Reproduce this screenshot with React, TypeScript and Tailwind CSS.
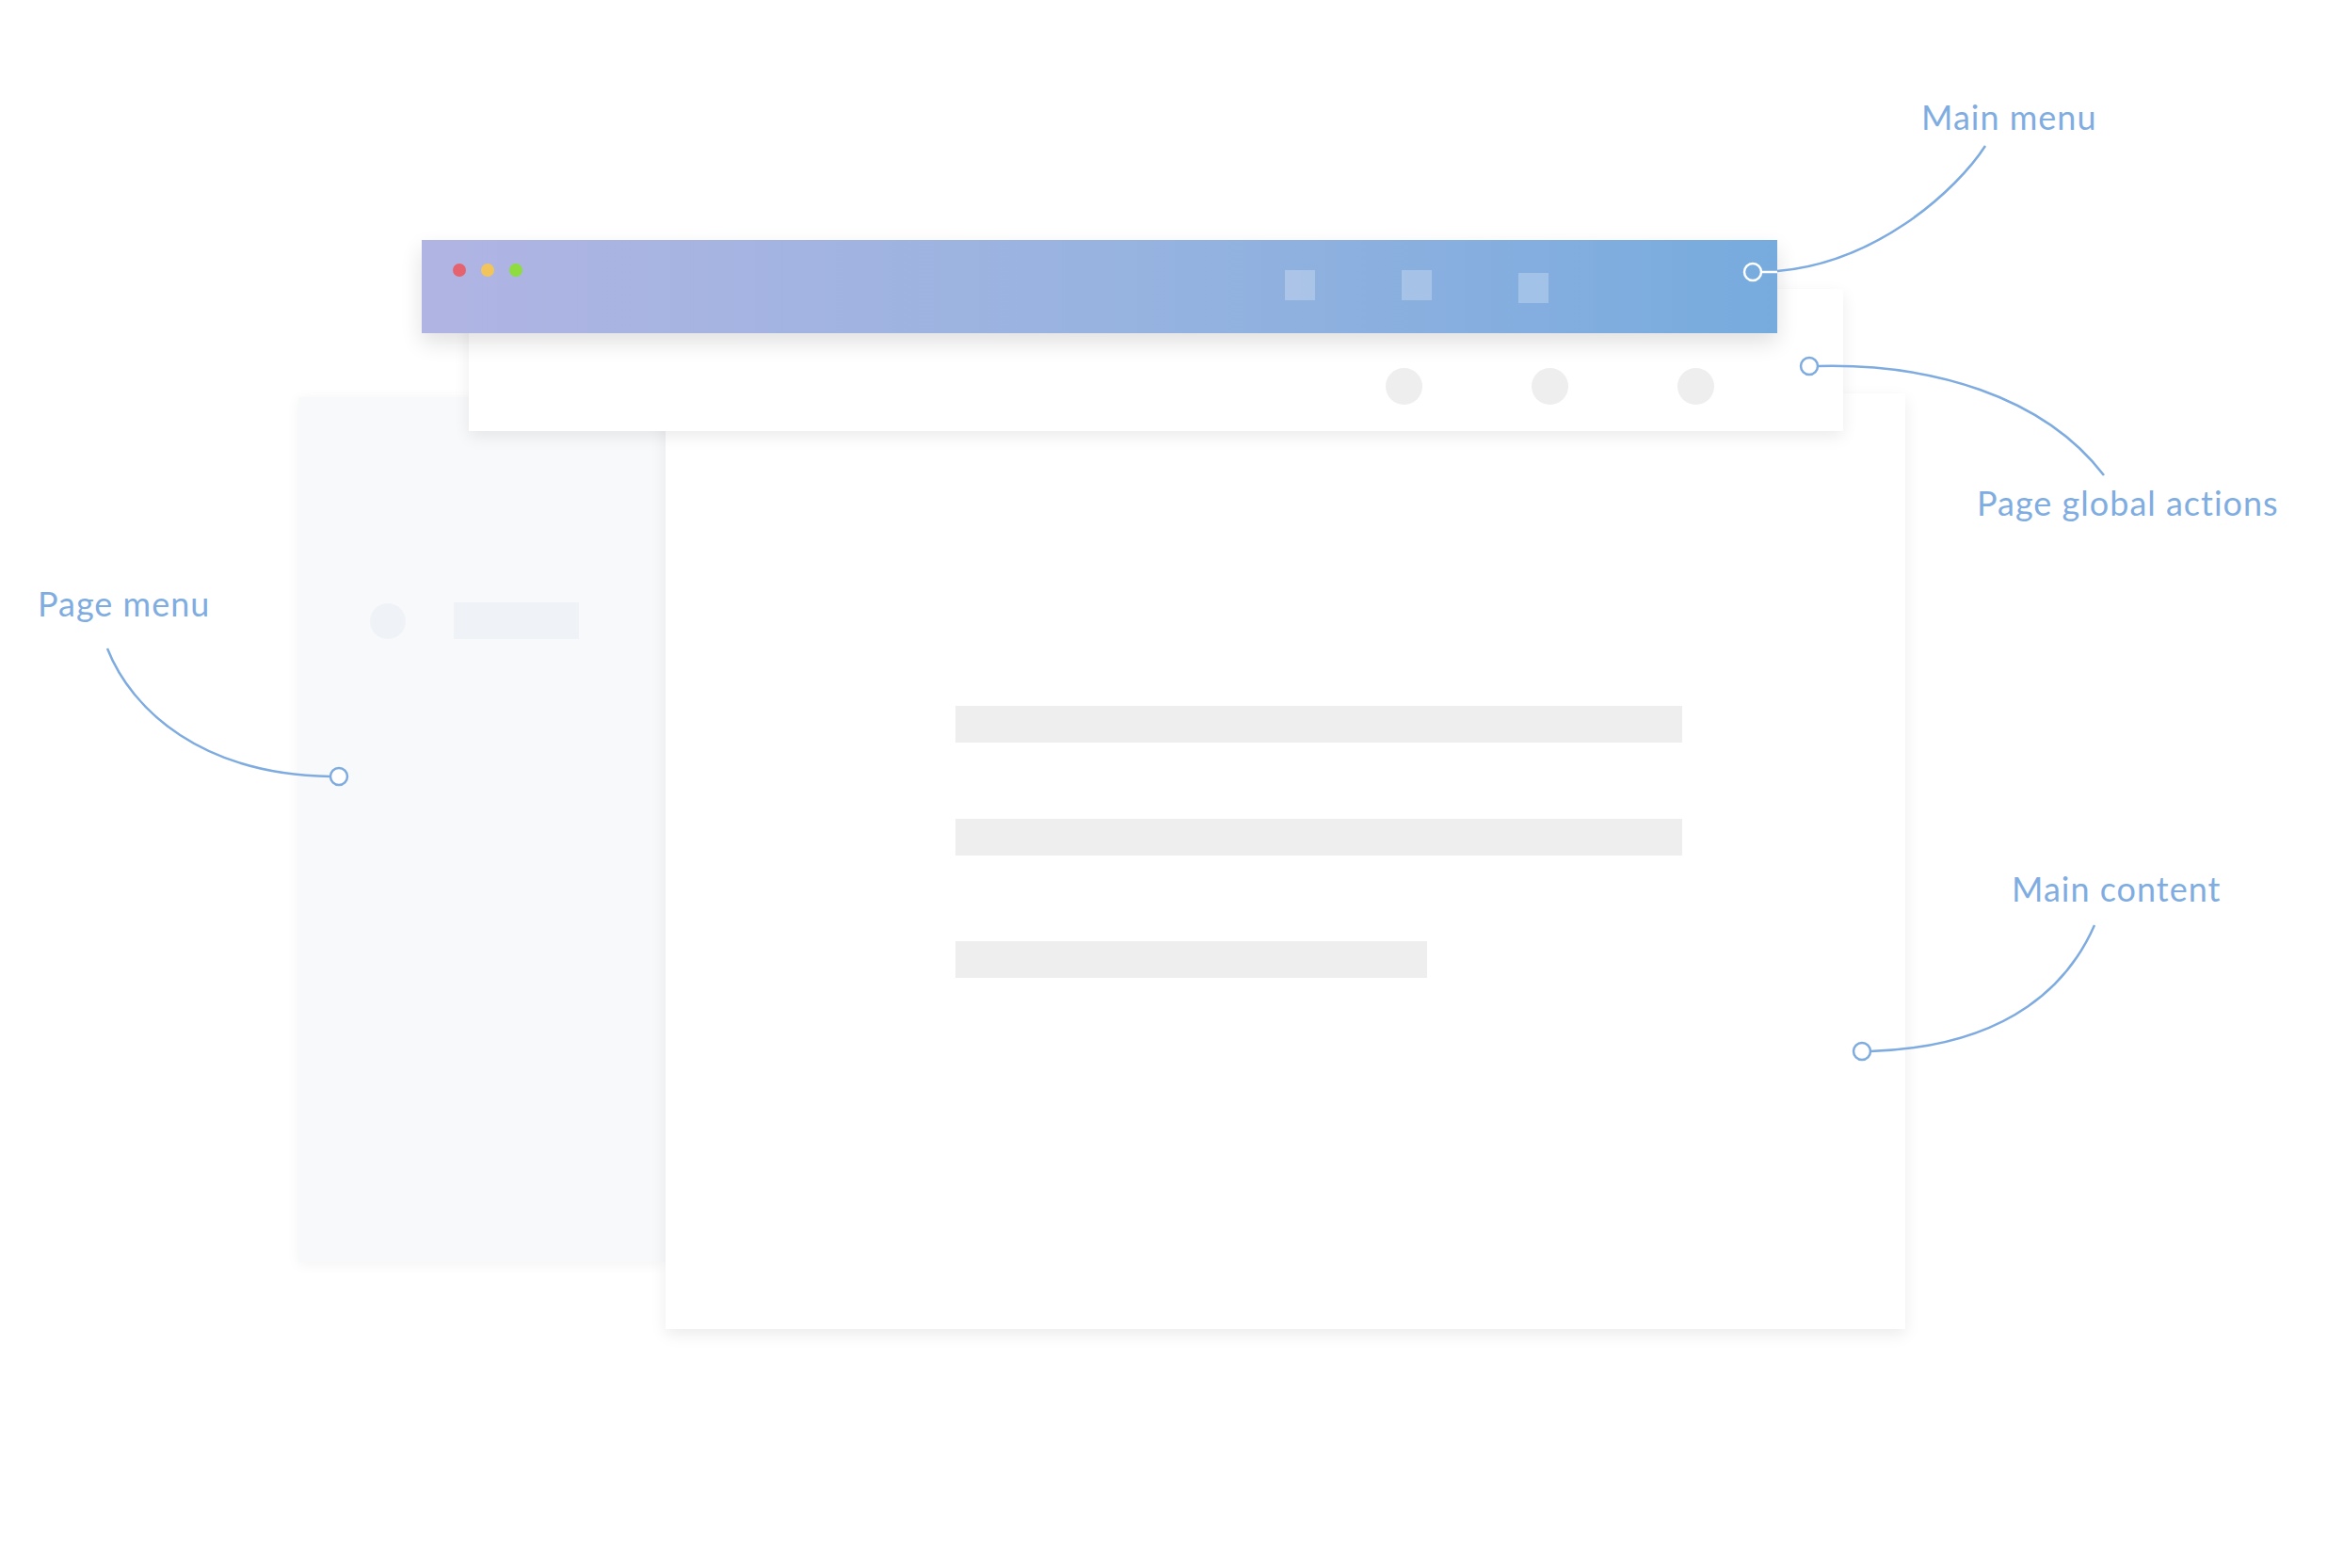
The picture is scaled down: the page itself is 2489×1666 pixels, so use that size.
const blue = "#7eabe0";

const Annotations = () => {
  return (
    <svg
      className="absolute inset-0 pointer-events-none"
      width={2489}
      height={1666}
      viewBox="0 0 2489 1666"
      fill="none"
    >
      {/* Main menu */}
      <path d="M1872 289 C1990 286 2080 200 2109 155" stroke={blue} strokeWidth={2.5} />
      <line x1={1871} y1={289} x2={1888} y2={289} stroke="#ffffff" strokeWidth={2.5} />
      <circle cx={1862} cy={289} r={9} stroke="#ffffff" strokeWidth={2.5} />

      {/* Page global actions */}
      <path d="M1931 389 C2050 386 2170 420 2235 505" stroke={blue} strokeWidth={2.5} />
      <circle cx={1922} cy={389} r={9} stroke={blue} strokeWidth={2.5} fill="#ffffff" />

      {/* Page menu */}
      <path d="M114 689 C140 755 215 823 351 825" stroke={blue} strokeWidth={2.5} />
      <circle cx={360} cy={825} r={9} stroke={blue} strokeWidth={2.5} fill="#ffffff" />

      {/* Main content */}
      <path d="M2225 983 C2200 1040 2140 1112 1987 1117" stroke={blue} strokeWidth={2.5} />
      <circle cx={1978} cy={1117} r={9} stroke={blue} strokeWidth={2.5} fill="#ffffff" />
    </svg>
  );
};

const Label = ({ text, className }: { text: string; className: string }) => (
  <div
    className={`absolute text-[36px] leading-none font-normal tracking-[1px] whitespace-nowrap text-[#80ade1] ${className}`}
  >
    {text}
  </div>
);

export default function App() {
  return (
    <div className="relative w-[2489px] h-[1666px] bg-white overflow-hidden font-['Lato',sans-serif]">
      {/* Page menu */}
      <div className="absolute left-[317px] top-[422px] w-[390px] h-[919px] bg-[#f8f9fb] shadow-[0_2px_14px_rgba(0,0,0,0.05)] pl-[76px] pt-[218px]">
        <div className="flex items-center gap-[51px]">
          <div className="w-[38px] h-[38px] rounded-full bg-[#eff2f7]"></div>
          <div className="w-[133px] h-[39px] bg-[#eff2f7]"></div>
        </div>
      </div>

      {/* Main content */}
      <div className="absolute left-[707px] top-[418px] w-[1317px] h-[994px] bg-white shadow-[0_6px_16px_rgba(0,0,0,0.08)] pl-[308px] pt-[332px]">
        <div className="flex flex-col">
          <div className="w-[772px] h-[39px] bg-[#eeeeee]"></div>
          <div className="w-[772px] h-[39px] bg-[#eeeeee] mt-[81px]"></div>
          <div className="w-[501px] h-[39px] bg-[#eeeeee] mt-[91px]"></div>
        </div>
      </div>

      {/* Page global actions */}
      <div className="absolute left-[498px] top-[307px] w-[1460px] h-[151px] bg-white shadow-[0_6px_16px_rgba(0,0,0,0.08)] pl-[974px] pt-[84px]">
        <div className="flex gap-[116px]">
          <div className="w-[39px] h-[39px] rounded-full bg-[#eeeeee]"></div>
          <div className="w-[39px] h-[39px] rounded-full bg-[#eeeeee]"></div>
          <div className="w-[39px] h-[39px] rounded-full bg-[#eeeeee]"></div>
        </div>
      </div>

      {/* Main menu */}
      <div className="absolute left-[448px] top-[255px] w-[1440px] h-[99px] bg-gradient-to-r from-[#b0b4e3] via-[#98b3e0] to-[#77abde] shadow-[0_10px_22px_rgba(0,0,0,0.12)] flex items-start">
        <div className="flex gap-[16px] ml-[33px] mt-[25px]">
          <div className="w-[14px] h-[14px] rounded-full bg-[#e5626f]"></div>
          <div className="w-[14px] h-[14px] rounded-full bg-[#f1c55c]"></div>
          <div className="w-[14px] h-[14px] rounded-full bg-[#8edc3f]"></div>
        </div>
        <div className="flex items-start gap-[92px] ml-[810px] mt-[32px]">
          <div className="w-[32px] h-[32px] bg-white/25"></div>
          <div className="w-[32px] h-[32px] bg-white/25"></div>
          <div className="w-[32px] h-[32px] bg-white/25 mt-[3px]"></div>
        </div>
      </div>

      <Annotations />

      <Label text="Main menu" className="left-[2041px] top-[106px]" />
      <Label text="Page global actions" className="left-[2100px] top-[516px]" />
      <Label text="Page menu" className="left-[40px] top-[623px]" />
      <Label text="Main content" className="left-[2137px] top-[926px]" />
    </div>
  );
}
